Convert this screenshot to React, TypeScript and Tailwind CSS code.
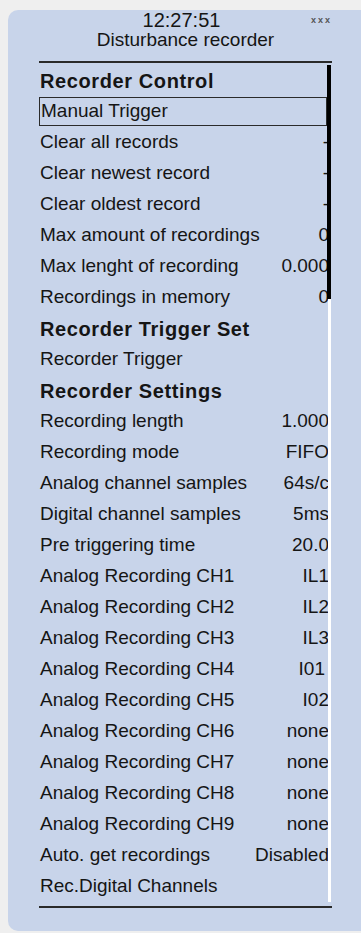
import React from "react";

type Row = {
  label: string;
  value?: string;
  bold?: boolean;
  selected?: boolean;
  valueClass?: string;
};

// rows of the recorder menu, top to bottom
const rows: Row[] = [
  { label: "Recorder Control", bold: true },
  { label: "Manual Trigger", selected: true },
  { label: "Clear all records", value: "-" },
  { label: "Clear newest record", value: "-" },
  { label: "Clear oldest record", value: "-" },
  { label: "Max amount of recordings", value: "0" },
  { label: "Max lenght of recording", value: "0.000" },
  { label: "Recordings in memory", value: "0" },
  { label: "Recorder Trigger Set", bold: true },
  { label: "Recorder Trigger" },
  { label: "Recorder Settings", bold: true },
  { label: "Recording length", value: "1.000" },
  { label: "Recording mode", value: "FIFO" },
  { label: "Analog channel samples", value: "64s/c" },
  { label: "Digital channel samples", value: "5ms" },
  { label: "Pre triggering time", value: "20.0" },
  { label: "Analog Recording CH1", value: "IL1" },
  { label: "Analog Recording CH2", value: "IL2" },
  { label: "Analog Recording CH3", value: "IL3" },
  { label: "Analog Recording CH4", value: "I01", valueClass: "mr-[4px]" },
  { label: "Analog Recording CH5", value: "I02" },
  { label: "Analog Recording CH6", value: "none" },
  { label: "Analog Recording CH7", value: "none" },
  { label: "Analog Recording CH8", value: "none" },
  { label: "Analog Recording CH9", value: "none" },
  { label: "Auto. get recordings", value: "Disabled" },
  { label: "Rec.Digital Channels" },
];

const MenuRow = ({ row }: { row: Row }) => {
  const label = (
    <span
      className={
        row.bold
          ? "whitespace-nowrap text-[20px] font-bold tracking-[0.6px]"
          : "whitespace-nowrap text-[19px]"
      }
    >
      {row.label}
    </span>
  );

  if (row.selected) {
    return (
      <div className="flex h-[31px] items-center">
        <div className="flex h-[29px] w-[288px] items-center border border-[#2b2b2b] pl-[1px]">
          {label}
        </div>
      </div>
    );
  }

  return (
    <div className="flex h-[31px] items-center pl-[1px] pr-[3px]">
      {label}
      {row.value && (
        <span className={`ml-auto whitespace-nowrap text-[19px] ${row.valueClass ?? ""}`}>
          {row.value}
        </span>
      )}
    </div>
  );
};

export default function App() {
  return (
    <div
      className="min-h-screen bg-[#efefef] pl-[8px] pt-[10px] text-[#151515]"
      style={{ fontFamily: '"Liberation Sans", Arial, sans-serif' }}
    >
      <div className="flex h-[921px] flex-col rounded-l-[10px] bg-[#c8d4ea] pl-[31px]">
        <div className="flex w-[293px] flex-col">
          {/* header */}
          <div className="relative flex flex-col items-center">
            <div className="pr-[8px] text-[20px] leading-[20px]">12:27:51</div>
            <div className="text-[19px] leading-[20px]">Disturbance recorder</div>
            <span className="absolute right-0 top-[5px] text-[9px] font-bold leading-[10px] tracking-[2px] text-[#555]">
              xxx
            </span>
          </div>

          <div className="mt-[11px] h-[2px] bg-[#2a2a2a]" />

          {/* menu list with its scroll bar laid over the value column */}
          <div className="mt-[2px] grid overflow-hidden">
            <div className="col-start-1 row-start-1 flex flex-col">
              {rows.map((row) => (
                <MenuRow key={row.label} row={row} />
              ))}
            </div>
            <div className="col-start-1 row-start-1 mr-[1px] flex w-[4px] flex-col items-end justify-self-end">
              <div className="h-[234px] w-[4px] bg-black" />
              <div className="w-[3px] flex-1 bg-white" />
            </div>
          </div>

          <div className="mt-[4px] h-[2px] bg-[#2a2a2a]" />
        </div>
      </div>
    </div>
  );
}
